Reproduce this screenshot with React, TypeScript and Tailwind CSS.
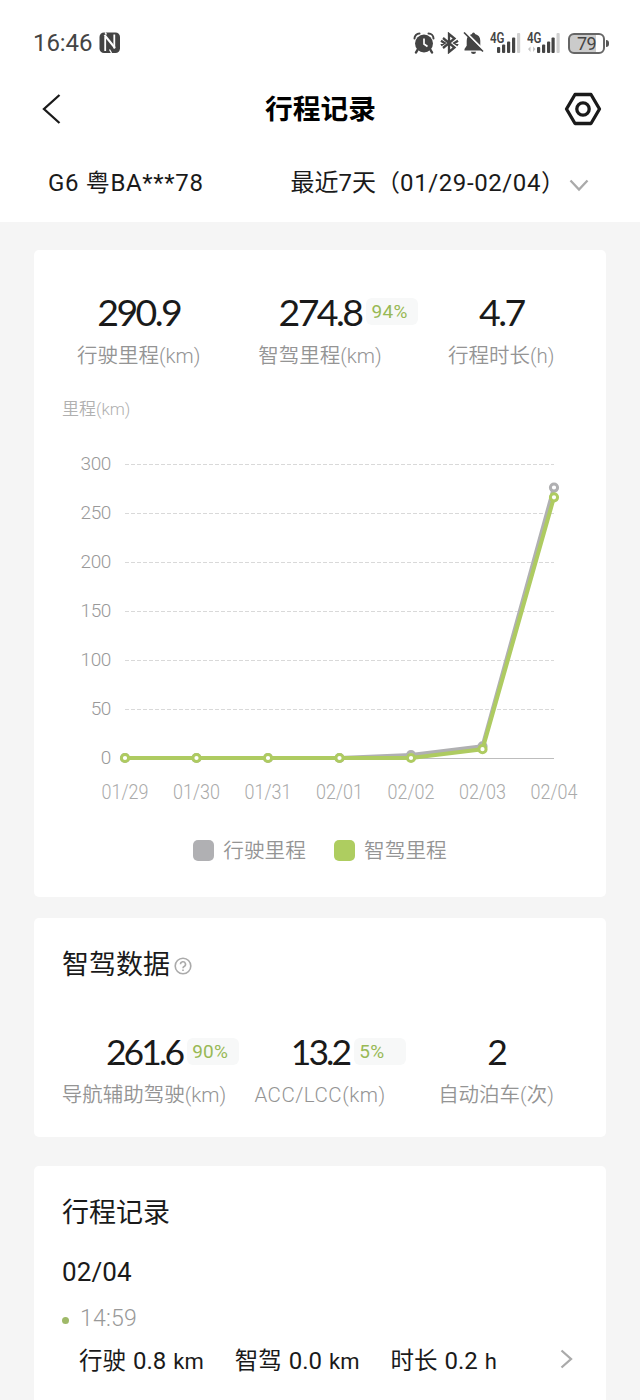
import React from 'react';
import clsx from 'clsx';

interface StatProps {
  value: string;
  label: string;
  percent?: string;
  size?: 'lg' | 'md';
  labelClass?: string;
}

const DAYS = ['01/29', '01/30', '01/31', '02/01', '02/02', '02/03', '02/04'];
const TICKS = [300, 250, 200, 150, 100, 50, 0];
const DRIVEN = [0, 0, 0, 0, 3, 12, 276];
const ASSISTED = [0, 0, 0, 0, 0, 9, 266];

const chartX = (i: number) => 91 + i * 71.5;
const chartY = (v: number) => 318 - v * 0.98;

const Signal: React.FC<{ data?: boolean }> = ({ data }) => (
  <svg width="33" height="24" viewBox="0 0 33 24" fill="#444">
    <text x="0" y="12" fontSize="14" fontWeight="600" fontFamily="Roboto, sans-serif" textLength="14.5" lengthAdjust="spacingAndGlyphs">4G</text>
    {data && <path d="M1 18l2.5-2.5V21zM6 15.500l2.500 2.500L6 21z" fill="#c4c4c4" />}
    <rect x={data ? 10 : 7} y="16" width="3.200" height="6" rx="1" />
    <rect x={data ? 15 : 12} y="13.500" width="3.200" height="8.500" rx="1" />
    <rect x={data ? 20 : 17} y="10.500" width="3.200" height="11.500" rx="1" />
    <rect x={data ? 24.500 : 22} y="6.500" width="3.200" height="15.500" rx="1" />
    <rect x={data ? 29.500 : 27} y="2" width="3.200" height="20" rx="1" fill="#d0d0d0" />
  </svg>
);

const StatusBar = () => (
  <div className="flex h-[86px] items-center pr-[31px] pl-[33px] text-[#444]">
    <span className="font-[Roboto,sans-serif] text-[24px] leading-6 font-[450] tracking-[-0.1px]">16:46</span>
    <svg className="ml-[7px]" width="22" height="22" viewBox="0 0 22 22">
      <rect x="0.500" y="0.500" width="20.500" height="20.500" rx="4.500" fill="#444" />
      <path d="M6.200 19V5M15.300 16.500V2.500" fill="none" stroke="#fff" strokeWidth="1.800" />
      <path d="M5.500 3l10.500 13" stroke="#fff" strokeWidth="2" />
      <path d="M10.500 17.500l2 3.500M6 0.500l1.500 2" stroke="#fff" strokeWidth="1.300" />
    </svg>
    <div className="ml-auto flex items-center">
      <svg width="22" height="22" viewBox="0 0 22 22">
        <path d="M1.500 6.500A5 5 0 0 1 6.500 1.500M15.500 1.500a5 5 0 0 1 5 5" fill="none" stroke="#444" strokeWidth="2" strokeLinecap="round" />
        <path d="M5 17l-2 3.500M17 17l2 3.500" stroke="#444" strokeWidth="2.500" strokeLinecap="round" />
        <circle cx="11" cy="11.500" r="9" fill="#444" />
        <path d="M11 6.500v5.500l3.500 2.500" fill="none" stroke="#fff" strokeWidth="1.700" />
      </svg>
      <svg className="ml-[5px]" width="19" height="22" viewBox="0 0 19 22" fill="none" stroke="#444" strokeWidth="2.300">
        <path d="M3 6l11.500 9.500L9 20V2l5.500 4.500L3 16" />
        <path d="M1 8.800l3.500 2.200L1 13.200M18 8.800l-3.500 2.200 3.500 2.200" />
      </svg>
      <svg className="ml-1" width="22" height="22" viewBox="0 0 22 22">
        <path d="M10.500 0.500a1.500 1.500 0 0 1 1.500 1.500c3.400.8 5.300 3.300 5.300 6.700v5l2.200 3.300v1.500h-18v-1.500l2.200-3.300v-5C3.700 5.300 5.600 2.800 9 2a1.500 1.500 0 0 1 1.500-1.500z" fill="#444" />
        <path d="M8 19.700h5a2.500 2.300 0 0 1-5 0z" fill="#444" />
        <path d="M2.500 0l19 19" stroke="#fff" strokeWidth="2" />
        <path d="M1 0.500l19 19" stroke="#444" strokeWidth="1.600" />
      </svg>
      <span className="ml-[5px]"><Signal /></span>
      <span className="ml-[4px]"><Signal data /></span>
      <div className="ml-[8px] flex items-center">
        <div className="h-[21px] w-[37px] rounded-[6px] border-2 border-[#666] bg-[linear-gradient(90deg,#cbcbcb_79%,#fff_79%)] text-center font-[Roboto,sans-serif] text-[18px] leading-[17px] font-normal tracking-[-0.5px]">79</div>
        <div className="ml-px h-[7px] w-[3px] rounded-r bg-[#555]" />
      </div>
    </div>
  </div>
);

const Stat: React.FC<StatProps> = ({ value, label, percent, size = 'lg', labelClass }) => (
  <div className="flex flex-col items-center">
    <div
      className={clsx(
        'relative h-11 font-[Lato,sans-serif] leading-[43px] font-normal text-[#1a1a1a]',
        size === 'lg' ? 'text-[37.5px] tracking-[-2.6px]' : 'text-[35.5px] tracking-[-2.9px]'
      )}
    >
      {value}
      {percent && (
        <span className="absolute top-[8px] left-full ml-[5px] h-[27px] w-[52px] rounded-md bg-[#f7f8f8] pl-[5px] text-left font-[Roboto,'Noto_Sans_CJK_SC',sans-serif] text-[19px] leading-[27px] font-[370] tracking-[0.3px] text-[#98b955]">
          {percent}
        </span>
      )}
    </div>
    <div
      className={clsx(
        'h-8 text-[20.5px] leading-8 font-[350] whitespace-nowrap text-[#949494]',
        size === 'lg' ? 'mt-1.5' : 'mt-[5px]',
        labelClass
      )}
    >
      {label}
    </div>
  </div>
);

const Series: React.FC<{ values: number[]; color: string }> = ({ values, color }) => (
  <g stroke={color} fill="none">
    <polyline points={values.map((v, i) => `${chartX(i)},${chartY(v)}`).join(' ')} strokeWidth="4" strokeLinejoin="round" />
    {values.map((v, i) => (
      <circle key={i} cx={chartX(i)} cy={chartY(v)} r="3.6" fill="#fff" strokeWidth="3" />
    ))}
  </g>
);

const MileageChart = () => (
  <svg width="572" height="370" viewBox="0 0 572 370" className="block font-[Roboto,sans-serif] font-light">
    {TICKS.map((t) => (
      <g key={t}>
        <line
          x1="91" x2="520" y1={chartY(t) + 0.5} y2={chartY(t) + 0.5}
          stroke={t === 0 ? '#bdbdbd' : '#d9d9d9'}
          strokeDasharray={t === 0 ? undefined : '4 2'}
        />
        <text x="77" y={chartY(t) + 5.5} textAnchor="end" fontSize="19" letterSpacing="-0.400" fill="#999">{t}</text>
      </g>
    ))}
    {DAYS.map((d, i) => (
      <text key={d} x={chartX(i)} y="358.500" textAnchor="middle" fontSize="19.500" fill="#aaa" textLength="47" lengthAdjust="spacingAndGlyphs">{d}</text>
    ))}
    <Series values={DRIVEN} color="#b0b0b2" />
    <Series values={ASSISTED} color="#aecb61" />
  </svg>
);

const Legend: React.FC<{ label: string; swatch: string }> = ({ label, swatch }) => (
  <div className="flex items-center gap-[9px]">
    <span className={clsx('h-[21px] w-[21px] rounded-[5px]', swatch)} />
    <span className="pt-px text-[20.7px] leading-8 font-[350] text-[#949494]">{label}</span>
  </div>
);

const TripValue: React.FC<{ name: string; value: string; unit: string; className?: string }> = ({ name, value, unit, className }) => (
  <div className={clsx('flex items-baseline whitespace-nowrap', className)}>
    <span className="text-[23.5px]">{name}</span>
    <span className="ml-[7px] text-[24px]">{value}</span>
    <span className="ml-[7px] text-[22px]">{unit}</span>
  </div>
);

export default function App() {
  return (
    <div className="flex h-[1400px] w-[640px] flex-col overflow-hidden bg-[#f5f5f5] font-[Roboto,'Noto_Sans_CJK_SC',sans-serif] font-[385] text-[#1a1a1a]">
      <header className="h-[222px] shrink-0 bg-white">
        <StatusBar />
        <div className="flex h-[46px] items-center justify-between pr-[38px] pl-[41px]">
          <svg width="20" height="32" viewBox="0 0 20 32" fill="none" stroke="#1a1a1a" strokeWidth="2.300">
            <path d="M18.500 2L3 16l15.500 14" />
          </svg>
          <h1 className="mt-[2px] ml-[16px] text-[27.7px] leading-10 font-bold text-black">行程记录</h1>
          <svg width="38" height="36" viewBox="0 0 38 36" fill="none" stroke="#1a1a1a" strokeWidth="3.300" strokeLinejoin="round">
            <path d="M11 3.500h16L35.500 18 27 32.500H11L2.500 18z" />
            <circle cx="19" cy="18" r="6.200" />
          </svg>
        </div>
        <div className="flex h-[102px] items-center pr-[51px] pl-12 text-[24px]">
          <span className="tracking-[0.65px]">G6 粤BA***78</span>
          <span className="ml-auto whitespace-nowrap">
            最近7天（<span className="tracking-[0.6px]">01/29-02/04</span>）
          </span>
          <svg className="mt-[3px] ml-[4px]" width="20" height="14" viewBox="0 0 20 14" fill="none" stroke="#aaa" strokeWidth="2.300">
            <path d="M1.500 2.500l8.500 9 8.500-9" />
          </svg>
        </div>
      </header>

      <main className="flex flex-col px-[34px] pt-7">
        <section className="h-[647px] rounded-[5px] bg-white pt-10">
          <div className="grid grid-cols-3 px-[14px]">
            <Stat value="290.9" label="行驶里程(km)" />
            <Stat value="274.8" label="智驾里程(km)" percent="94%" />
            <Stat value="4.7" label="行程时长(h)" />
          </div>
          <div className="mt-[25px] pl-7 text-[17px] leading-6 font-[350] text-[#b0b0b0]">里程(km)</div>
          <div className="mt-[19px]">
            <MileageChart />
          </div>
          <div className="mt-[24px] flex justify-center gap-7">
            <Legend label="行驶里程" swatch="bg-[#b0b0b3]" />
            <Legend label="智驾里程" swatch="bg-[#aecd60]" />
          </div>
        </section>

        <section className="mt-[21px] h-[219px] rounded-[5px] bg-white pt-[26px]">
          <div className="flex items-center pl-7">
            <h2 className="text-[27px] leading-[42px]">智驾数据</h2>
            <svg className="mt-[1px] ml-[4px]" width="18" height="18" viewBox="0 0 18 18" fill="none" stroke="#aaa" strokeWidth="1.600">
              <circle cx="9" cy="9" r="7.800" />
              <path d="M6.500 7.300a2.500 2.500 0 1 1 3.600 2.200c-.8.400-1.100.8-1.100 1.700M9 12.500v1.500" />
            </svg>
          </div>
          <div className="mt-[44px] grid grid-cols-3 px-[22px]">
            <Stat value="261.6" label="导航辅助驾驶(km)" percent="90%" size="md" />
            <Stat value="13.2" label="ACC/LCC(km)" percent="5%" size="md" labelClass="tracking-[0.5px]" />
            <Stat value="2" label="自动泊车(次)" size="md" />
          </div>
        </section>

        <section className="mt-[29px] h-[260px] rounded-[5px] bg-white px-7 pt-[26px]">
          <h2 className="text-[27px] leading-[42px]">行程记录</h2>
          <div className="mt-[20px] text-[26px] leading-9 tracking-[0.1px]">02/04</div>
          <div className="mt-[13px] flex items-center text-[23px] leading-8 font-light tracking-[0.2px] text-[#999]">
            <span className="mt-[2px] mr-[11px] h-[7px] w-[7px] rounded-full bg-[#9fb968]" />
            14:59
          </div>
          <div className="mt-[8px] flex h-9 items-center pl-[17px]">
            <TripValue name="行驶" value="0.8" unit="km" />
            <TripValue name="智驾" value="0.0" unit="km" className="ml-[31px]" />
            <TripValue name="时长" value="0.2" unit="h" className="ml-[31px]" />
            <svg className="mr-[5px] mb-[5px] ml-auto" width="13" height="20" viewBox="0 0 13 20" fill="none" stroke="#aaa" strokeWidth="2.300">
              <path d="M1.500 1.500L11 10l-9.500 8.500" />
            </svg>
          </div>
        </section>
      </main>
    </div>
  );
}
